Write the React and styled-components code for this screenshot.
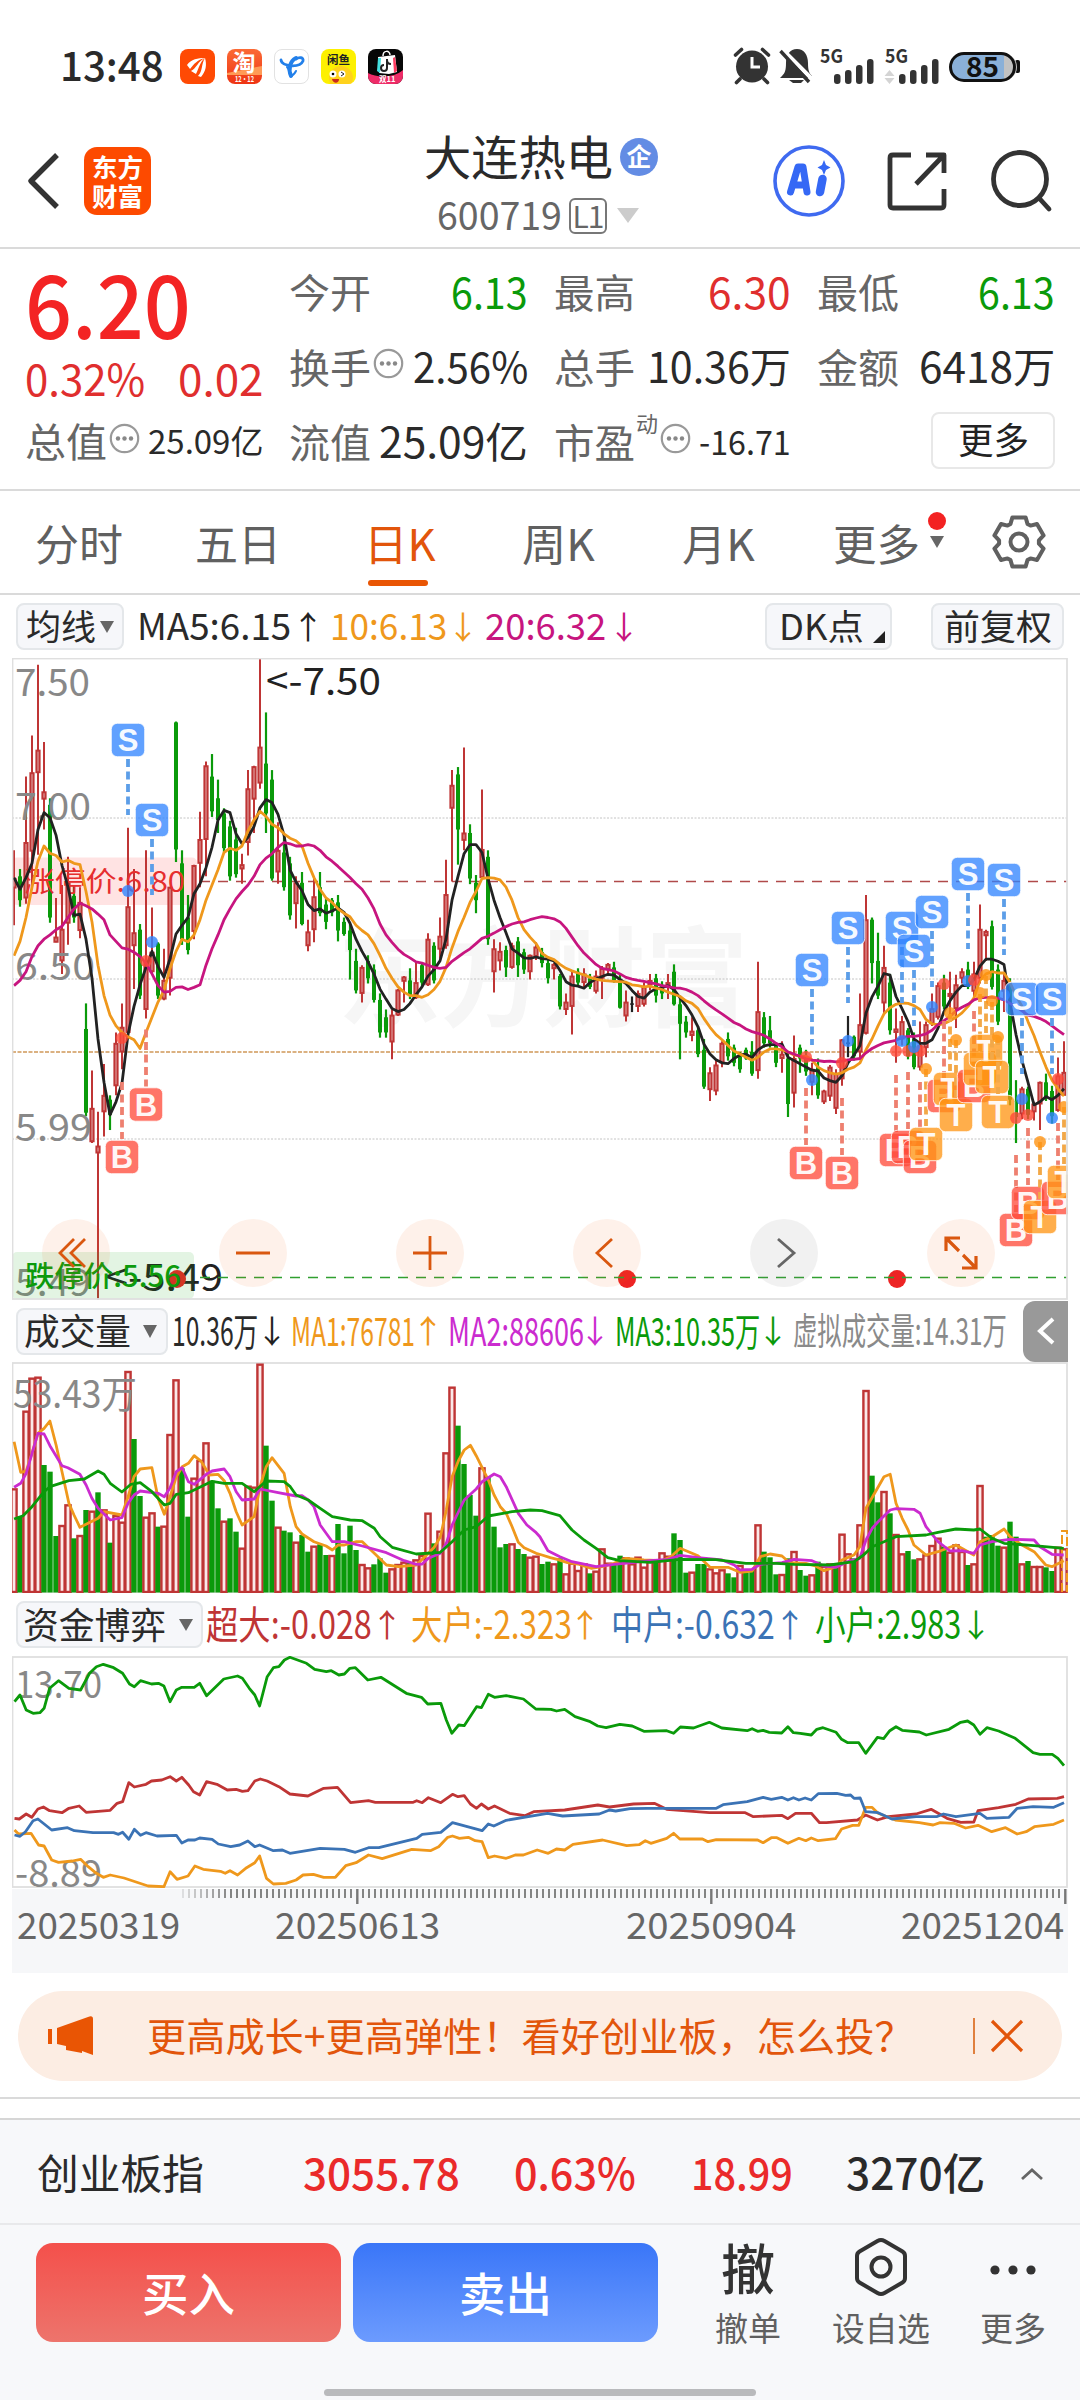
import { useLayoutEffect, useRef, useState } from 'react';
import styled, { createGlobalStyle } from 'styled-components';

const RED = '#bf3535';
const GREEN = '#0a9a0a';
const ORANGE = '#ef981c';
const MAGENTA = '#c7157f';
const PURPLE = '#cb2bcf';
const BLUE = '#3b73b5';
const BRAND = '#e2550b';
const FONT = '"Noto Sans CJK SC", sans-serif';

const GlobalStyle = createGlobalStyle`
* { box-sizing: border-box; }
body { margin: 0; background: #fff; }
`;

const Page = styled.div`
width: 1080px;
height: 2400px;
overflow: hidden;
display: flex;
flex-direction: column;
background: #fff;
color: #2a2a2a;
font-family: ${FONT};
svg { display: block; flex: none; overflow: visible; }
`;

/* text squeezed or stretched to a given width */
const FitBox = styled.span`
display: block;
flex: none;
width: ${p => p.$w}px;
margin-left: ${p => p.$ml || 0}px;
padding-bottom: 0.1em;
white-space: nowrap;
line-height: 1;
font-size: ${p => p.$size}px;
font-weight: ${p => p.$weight || 400};
color: ${p => p.$color || 'inherit'};
span { display: inline-block; transform-origin: 0 50%; }
`;

function Fit({ w, ml, size, weight, color, children }) {
  const ref = useRef(null);
  const [scale, setScale] = useState(1);
  useLayoutEffect(() => {
    setScale(w / ref.current.offsetWidth);
  }, [w, children]);
  return (
    <FitBox $w={w} $ml={ml} $size={size} $weight={weight} $color={color}>
      <span ref={ref} style={{ transform: `scaleX(${scale})` }}>{children}</span>
    </FitBox>
  );
}

const Arrow = styled.span`
flex: none;
display: flex;
justify-content: center;
width: 14px;
margin-left: ${p => p.$ml}px;
padding-bottom: 4px;
line-height: 1;
font-size: 32px;
color: ${p => p.$color};
`;

const Triangle = styled.i`
flex: none;
width: 0;
height: 0;
margin-left: ${p => p.$ml}px;
margin-top: ${p => p.$mt || 0}px;
border-left: ${p => p.$w / 2}px solid transparent;
border-right: ${p => p.$w / 2}px solid transparent;
border-top: ${p => p.$h}px solid ${p => p.$color || '#666'};
`;

/* ---------- status bar ---------- */
const StatusBar = styled.div`
display: flex;
align-items: center;
height: 74px;
margin: 29px 0 11px;
padding-left: 60px;
`;
const AppIcon = styled.div`
flex: none;
width: 35px;
height: 35px;
margin-left: ${p => p.$ml || 12}px;
border-radius: 8px;
overflow: hidden;
background: ${p => p.$bg};
border: ${p => (p.$line ? '1px solid #e2e2e2' : 'none')};
`;
const StatusRight = styled.div`
display: flex;
align-items: center;
margin-left: 331px;
`;

function StatusIcons() {
  return (
    <svg width="290" height="40" viewBox="0 0 290 40">
      <g fill="#333" stroke="#333">
        <circle cx="18" cy="20.500" r="16" stroke="none" />
        <path d="M1.500 9 7.500 3.500M34.500 9 28.500 3.500M6 33 2.500 36.500M30 33 33.500 36.500" strokeWidth="3.600" strokeLinecap="round" />
        <path d="M18 11v10h8" fill="none" stroke="#fff" strokeWidth="3" />
        <path d="M48 30c3-3 4-6 4-13 0-8 4-14 11-14s11 6 11 14c0 7 1 10 4 13v2H46z" stroke="none" />
        <path d="M55 34h15l-3 3h-8z" stroke="none" />
        <path d="M49 4 78 33" stroke="#fff" strokeWidth="4" />
        <path d="M46.500 5 75 36" strokeWidth="3.400" />
      </g>
      <g fill="#333" fontFamily='"Noto Sans CJK SC", sans-serif' fontWeight="700" fontSize="19">
        <text x="86" y="17" textLength="23" lengthAdjust="spacingAndGlyphs">5G</text>
        <text x="151" y="17" textLength="23" lengthAdjust="spacingAndGlyphs">5G</text>
      </g>
      <g fill="#333">
        {[100, 165].map(x =>
          [10, 14, 19, 25].map((h, i) => (
            <rect key={x + '-' + h} x={x + i * 11} y={38 - h} width="6.500" height={h} rx="3" />
          ))
        )}
      </g>
      <path d="m155.500 24 5 6h-10zM155.500 38l5-6h-10z" fill="#d4d4d4" />
      <rect x="281" y="14" width="5" height="13" rx="2" fill="#111" />
      <rect x="216.500" y="7.500" width="64" height="27" rx="13.500" fill="#8ab0d8" />
      <path d="M270 8a13 13 0 0 1 0 26z" fill="#c2c2c2" />
      <rect x="216.500" y="7.500" width="64" height="27" rx="13.500" fill="none" stroke="#111" strokeWidth="3" />
      <text x="232" y="31" fontFamily='"Noto Sans CJK SC", sans-serif' fontWeight="700" fontSize="28" textLength="33" lengthAdjust="spacingAndGlyphs" fill="#111">85</text>
    </svg>
  );
}

/* ---------- header ---------- */
const Header = styled.header`
display: flex;
align-items: center;
height: 135px;
padding-left: 27px;
border-bottom: 2px solid #dadada;
`;
const Logo = styled.div`
flex: none;
width: 67px;
height: 68px;
margin-left: 23px;
padding: 4px 0 0 8px;
border-radius: 13px;
background: #fd4a00;
color: #fff;
font-weight: 700;
font-size: 25.500px;
line-height: 29px;
`;
const TitleBox = styled.div`
width: 240px;
margin-left: 273px;
margin-top: 10px;
`;
const TitleRow = styled.div`
display: flex;
align-items: center;
height: ${p => p.$h}px;
padding-left: ${p => p.$pl || 0}px;
`;
const Verified = styled.span`
flex: none;
width: 38px;
height: 38px;
margin-left: 7px;
border-radius: 50%;
background: #638ce4;
color: #fff;
font-weight: 700;
font-size: 25px;
line-height: 35px;
text-align: center;
`;
const Level = styled.span`
flex: none;
width: 38px;
height: 36px;
margin-left: 7px;
border: 2px solid #777;
border-radius: 6px;
color: #666;
font-size: 30px;
line-height: 31px;
text-align: center;
letter-spacing: -1px;
`;

/* ---------- quote ---------- */
const Quote = styled.section`
display: flex;
height: 242px;
padding-left: 25px;
border-bottom: 2px solid #dadada;
`;
const QuoteMain = styled.div`
width: 264px;
padding-top: 12px;
`;
const Line = styled.div`
display: flex;
align-items: center;
height: ${p => p.$h}px;
`;
const QuoteGrid = styled.div`
display: grid;
grid-template-columns: 239px 237px 238px;
grid-auto-rows: 75px;
column-gap: 26px;
padding-top: 6px;
`;
const Cell = styled.div`
display: flex;
align-items: center;
`;
const Push = styled.i`
flex: 1;
`;
const Sup = styled.sup`
width: 22px;
margin: -42px 0 0 1px;
font-size: 22px;
line-height: 1;
color: #666;
`;
const MoreButton = styled.button`
width: 124px;
height: 57px;
margin-left: auto;
margin-bottom: 5px;
display: flex;
align-items: center;
justify-content: center;
padding: 0;
border: 2px solid #e8e8e8;
border-radius: 8px;
background: #fff;
color: #222;
font-family: inherit;
`;

function Info({ ml }) {
  return (
    <svg width="31" height="31" viewBox="0 0 31 31" style={{ marginLeft: ml, marginTop: -8 }}>
      <circle cx="15.500" cy="15.500" r="13.700" fill="none" stroke="#999" strokeWidth="2.200" />
      <g fill="#888"><circle cx="9" cy="15.500" r="2.200" /><circle cx="15.500" cy="15.500" r="2.200" /><circle cx="22" cy="15.500" r="2.200" /></g>
    </svg>
  );
}

/* ---------- tabs ---------- */
const Tabs = styled.nav`
display: flex;
height: 104px;
padding-left: 35px;
border-bottom: 2px solid #dadada;
color: #606060;
`;
const Tab = styled.div`
flex: none;
width: ${p => p.$w}px;
margin-left: ${p => p.$ml || 0}px;
padding-top: 19px;
color: ${p => (p.$active ? BRAND : 'inherit')};
&::after {
  content: '';
  display: ${p => (p.$active ? 'block' : 'none')};
  width: 60px;
  height: 6px;
  margin: 1px 0 0 4px;
  border-radius: 3px;
  background: #e95504;
}
`;
const TabMark = styled.div`
display: flex;
flex-direction: column;
align-items: center;
width: 20px;
margin: 21px 0 0 7px;
`;
const Dot = styled.i`
width: 18px;
height: 18px;
margin-bottom: 6px;
border-radius: 50%;
background: #f32222;
`;

function Gear() {
  const pts = [];
  for (let k = 0; k < 6; k++) {
    [[-25, 20], [-15, 25.500], [15, 25.500], [25, 20]].forEach(([a, r]) => {
      const t = ((k * 60 + a - 90) * Math.PI) / 180;
      pts.push(`${(28 + r * Math.cos(t)).toFixed(1)},${(28 + r * Math.sin(t)).toFixed(1)}`);
    });
  }
  return (
    <svg width="56" height="56" viewBox="0 0 56 56" style={{ margin: '23px 0 0 44px' }}>
      <polygon points={pts.join(' ')} fill="none" stroke="#606060" strokeWidth="4" strokeLinejoin="round" />
      <circle cx="28" cy="28" r="8.500" fill="none" stroke="#606060" strokeWidth="4" />
    </svg>
  );
}

/* ---------- indicator rows ---------- */
const Legend = styled.div`
display: flex;
align-items: center;
height: ${p => p.$h}px;
padding-left: 16px;
margin-right: 12px;
`;
const Chip = styled.div`
flex: none;
display: flex;
align-items: center;
width: ${p => p.$w}px;
height: 47px;
margin-left: ${p => p.$ml || 0}px;
padding-left: ${p => p.$pl}px;
border: 2px solid #e4e7ea;
border-radius: 8px;
background: #f6f7fa;
`;
const Corner = styled.i`
margin: 20px 0 0 9px;
border-left: 12px solid transparent;
border-bottom: 12px solid #222;
`;
const Collapse = styled.div`
display: flex;
align-items: center;
justify-content: center;
width: 45px;
height: 61px;
margin-left: auto;
border-radius: 12px 0 0 12px;
background: #999;
`;

/* ---------- charts ---------- */
const Panel = styled.div`
flex: none;
position: relative;
width: 1056px;
height: ${p => p.$h}px;
margin-left: 12px;
overflow: hidden;
`;
const Controls = styled.div`
position: absolute;
left: 30px;
bottom: 13px;
display: flex;
gap: 109px;
`;
const Round = styled.div`
width: 68px;
height: 68px;
display: flex;
align-items: center;
justify-content: center;
border-radius: 50%;
background: ${p => (p.$grey ? 'rgba(120,120,120,.1)' : 'rgba(245,100,20,.09)')};
`;

// one candle per trading day: colour, high, body top, body bottom, low
const candles = `r 485 550 572 658|g 528 545 600 615|r 315 467 595 608|r 220 306 487 570|r 57 254 306 495|r 235 350 367 437|g 365 380 640 652|r 595 685 697 697|r 565 667 740 770|r 500 560 653 703|g 565 590 640 652|r 570 605 670 688|g 838 897 1090 1098|r 993 1080 1157 1160|r 1088 1167 1183 1521|r 978 1050 1088 1145|g 1050 1060 1095 1130|r 905 930 1028 1050|r 838 893 950 990|r 433 615 905 920|r 528 675 705 805|g 655 668 820 828|r 485 740 852 873|r 617 720 765 770|g 697 700 820 828|r 712 785 828 831|r 570 570 780 820|g 188 190 483 512|g 485 515 690 703|g 588 640 715 725|r 518 520 672 690|r 396 460 515 570|r 280 290 460 545|g 263 315 395 408|g 322 365 415 445|g 388 400 480 490|g 417 430 545 555|g 433 460 540 548|r 493 518 528 562|r 300 343 467 497|r 290 292 367 445|r 42 247 330 343|g 167 285 400 445|g 300 322 550 555|r 420 485 535 562|g 455 490 570 578|g 500 515 635 645|r 545 560 608 665|g 535 560 655 658|r 645 673 705 718|r 550 592 668 697|g 535 570 630 637|g 597 610 650 667|g 595 600 628 637|g 588 605 670 695|g 640 650 678 682|g 655 670 715 783|g 712 740 808 815|r 750 755 815 836|g 727 740 780 792|g 748 760 830 836|g 815 830 905 917|g 852 870 905 917|r 852 865 927 967|r 805 807 865 867|r 775 777 787 836|g 757 785 820 828|r 742 790 825 828|g 745 750 790 798|r 676 690 795 798|g 697 705 785 792|r 640 683 713 735|r 507 587 705 712|r 300 335 388 557|g 293 310 437 518|r 248 445 462 485|g 425 445 550 563|g 542 560 600 630|r 345 483 548 550|g 485 500 690 703|r 690 712 765 813|r 697 718 740 762|g 705 715 755 777|r 698 705 755 758|g 685 695 750 777|g 712 720 760 770|r 725 727 765 783|r 697 708 730 738|g 710 720 745 755|g 735 745 780 792|r 745 748 758 783|g 770 775 845 852|r 815 835 852 865|r 763 775 845 910|g 757 765 790 798|r 757 770 790 800|g 770 780 800 805|r 762 775 810 815|r 752 757 780 828|r 745 748 760 770|g 742 755 785 790|g 770 790 848 850|r 808 835 867 880|k 822 838 841 858|r 808 815 845 858|r 790 800 840 845|r 770 785 795 808|g 770 780 820 836|g 787 795 815 828|r 770 790 800 828|g 748 765 840 843|g 820 840 885 967|g 867 880 905 917|r 870 902 912 925|g 890 900 955 962|g 920 945 1030 1035|r 985 998 1037 1063|r 970 980 1040 1050|r 925 930 975 985|g 905 920 960 970|g 933 940 975 983|g 950 960 990 998|g 940 945 965 968|g 925 950 1000 1005|r 742 857 993 1012|g 858 870 930 940|g 867 900 930 940|g 930 935 975 985|r 925 955 965 998|g 950 965 1070 1100|r 912 965 1045 1078|g 933 940 965 998|g 945 960 995 1005|r 975 990 1020 1050|g 965 985 1050 1058|r 1037 1040 1065 1070|r 980 985 1052 1063|r 990 1000 1080 1093|r 920 922 1012 1028|k 867 928 932 962|g 912 915 960 970|r 815 887 950 965|r 588 645 907 910|g 640 645 745 792|g 675 740 820 828|r 705 755 837 865|g 770 790 900 910|r 850 897 905 975|r 867 880 920 935|g 895 900 960 967|g 905 920 985 990|r 880 935 985 993|r 880 887 940 962|r 815 850 885 890|r 790 797 870 875|g 772 790 845 852|r 765 815 822 875|r 772 795 850 895|r 757 765 780 792|g 742 760 800 805|r 742 770 810 825|r 610 667 780 792|r 668 672 682 740|g 647 660 800 806|g 748 760 880 888|r 770 785 810 858|g 780 800 1060 1073|g 1015 1060 1100 1160|r 1030 1035 1093 1105|g 1030 1035 1095 1105|r 1065 1070 1088 1108|r 1018 1020 1070 1130|g 1000 1020 1055 1063|g 1028 1040 1098 1115|r 963 1005 1085 1088|r 925 997 1050 1050`
  .split('|')
  .map(row => {
    const [c, ...v] = row.split(' ');
    return { c, v: v.map(Number) };
  });

const ma5 = [548,575,548,515,437,398,410,450,520,570,635,632,690,780,920,1020,1095,1065,1022,910,845,795,755,718,753,778,735,678,658,640,585,562,525,478,415,393,398,447,470,455,430,387,368,375,402,450,530,558,578,610,624,620,630,625,618,628,653,690,718,742,770,805,828,850,857,852,838,818,800,775,760,740,690,600,545,493,472,472,490,550,600,640,675,712,722,733,734,731,735,736,740,762,788,796,798,803,790,782,776,771,773,783,792,808,822,826,812,804,802,797,806,825,843,865,892,932,955,968,975,977,965,957,955,963,945,936,933,933,932,962,970,977,985,992,994,1010,1016,1020,1005,975,957,935,860,823,798,769,773,822,850,880,920,930,930,922,895,857,832,812,797,797,783,752,736,736,741,748,835,910,970,1020,1072,1065,1053,1060,1050,1035];
const ma10 = [728,695,640,570,510,475,492,497,512,508,515,518,580,650,750,820,865,890,905,915,922,942,905,870,835,808,758,718,690,696,680,645,600,565,530,490,480,485,475,440,415,395,407,425,433,447,457,463,475,515,548,575,595,605,620,630,638,658,670,680,700,727,757,780,800,812,820,820,824,818,806,787,755,710,672,640,605,580,550,548,549,553,570,600,640,668,685,700,723,732,737,748,757,763,768,772,778,782,785,786,787,788,789,795,797,800,798,803,806,812,817,822,832,838,850,873,893,910,922,935,948,955,962,969,962,950,943,943,945,950,957,960,960,968,985,993,998,1001,998,990,985,975,945,920,890,862,848,840,837,838,843,852,875,885,887,885,878,870,860,845,825,785,770,765,768,768,790,820,845,880,912,950,985,1015,1035,1052];
const ma20 = [797,785,765,730,705,690,680,668,660,640,620,607,613,620,632,645,680,695,710,713,720,730,745,770,797,812,810,801,800,806,801,795,750,712,680,645,620,597,580,565,545,518,503,493,478,467,470,475,475,472,475,485,500,510,522,535,548,562,575,595,620,655,680,697,713,725,733,742,745,750,755,757,755,741,731,721,712,700,688,683,676,668,661,655,651,650,645,641,638,640,643,650,665,685,705,722,735,748,757,760,763,770,778,782,785,787,790,793,797,799,802,803,806,812,820,832,843,853,862,872,882,888,897,903,907,912,920,930,938,950,955,960,966,969,970,972,971,973,971,968,967,965,952,942,935,929,926,923,917,914,914,912,908,900,887,878,868,855,847,840,830,825,824,824,826,830,838,845,855,865,868,873,880,890,900,910];

// kind, x, price point, badge centre
const marks = [
  ['S', 128, 891, 740], ['S', 152, 942, 820], ['B', 146, 961, 1104.5], ['B', 122, 1038, 1157],
  ['B', 806, 1057, 1163], ['B', 842, 1063, 1173], ['S', 812, 1080, 970], ['S', 848, 1041, 928],
  ['B', 896, 1051, 1150], ['B', 908, 1051, 1147], ['B', 920, 1051, 1157], ['T', 926, 1069, 1144],
  ['S', 902, 1041, 928], ['S', 914, 1047, 951], ['S', 932, 1007, 912], ['B', 944, 984, 1096],
  ['T', 950, 1013, 1089], ['T', 956, 1040, 1115], ['S', 968, 981, 874], ['B', 974, 980, 1086],
  ['T', 980, 993, 1069], ['T', 986, 975, 1051], ['T', 992, 1001, 1077], ['T', 998, 1037, 1112],
  ['S', 1004, 995, 880], ['B', 1016, 1118, 1230], ['S', 1022, 1099, 999], ['B', 1028, 1115, 1203],
  ['T', 1040, 1142, 1217], ['S', 1052, 1118, 999], ['B', 1058, 1079, 1198], ['T', 1064, 1107, 1182],
];
const markColor = { S: '#2f84ff', B: '#ff4a38', T: '#ff9412' };

const dayX = i => 14 + i * 6;
const priceY = v => v / 2.306 + 640;
const dayLine = arr => arr.map((v, i) => `${dayX(i)},${priceY(v).toFixed(1)}`).join(' ');

function AxisText({ x, cy, w, size = 38, color = '#888', weight = 400, children }) {
  return (
    <text x={x} y={cy + size * 0.367} fontSize={size} fontFamily={FONT} fontWeight={weight} fill={color} textLength={w} lengthAdjust="spacingAndGlyphs">
      {children}
    </text>
  );
}

function Mark({ kind, x, dot, badge }) {
  const up = kind === 'S';
  const color = markColor[kind];
  return (
    <g>
      <line x1={x} x2={x} y1={up ? badge + 19 : badge - 75} y2={up ? badge + 75 : badge - 18} stroke={up ? '#5c9ee8' : kind === 'B' ? '#ee8070' : '#f2a848'} strokeWidth="3.800" strokeDasharray="8 4.500" />
      <circle cx={x} cy={dot} r="6" fill={color} opacity=".8" />
      <rect x={x - 16.7} y={badge - 16.7} width="33.400" height="33.400" rx="6" fill={color} fillOpacity=".76" stroke="#fff" strokeOpacity=".8" strokeWidth="1" />
      <text x={x} y={badge + 11} fontSize="31" fontFamily='"Liberation Sans", Arial, sans-serif' fontWeight="700" fill="#fff" fillOpacity=".95" textAnchor="middle">{kind}</text>
    </g>
  );
}

function PriceChart() {
  return (
    <svg width="1056" height="642" viewBox="12 658 1056 642">
      <AxisText x={338} cy={978} w={410} size={108} weight={700} color="#f6f6f6">东方财富</AxisText>
      {[818, 979, 1139].map(y => (
        <line key={y} x1="12" x2="1067" y1={y} y2={y} stroke="#c4c4c4" strokeWidth="1" strokeDasharray="2 1.500" />
      ))}
      <rect x="12" y="857.500" width="185" height="47.500" rx="5" fill="#ffe3e3" />
      <line x1="200" x2="1067" y1="881.500" y2="881.500" stroke="#b04a4a" strokeWidth="1.500" strokeDasharray="10 8" />
      <line x1="12" x2="1067" y1="1052" y2="1052" stroke="#d09858" strokeWidth="1.600" strokeDasharray="4 1.500" />
      {candles.map(({ c, v }, i) => {
        const [hi, top, bot, lo] = v.map(priceY);
        const x = dayX(i);
        if (c === 'r') {
          return (
            <g key={i} stroke={RED} strokeWidth="2">
              <line x1={x} x2={x} y1={hi} y2={lo} />
              <rect x={x - 1.6} y={top + 0.5} width="3.200" height={Math.max(bot - top - 1, 2)} fill="#e09a9a" />
            </g>
          );
        }
        const fill = c === 'g' ? GREEN : '#222';
        return (
          <g key={i} fill={fill}>
            <rect x={x - 1.1} y={hi} width="2.200" height={lo - hi} />
            <rect x={x - 2} y={top} width="4" height={bot - top} />
          </g>
        );
      })}
      <AxisText x={15} cy={682} w={75}>7.50</AxisText>
      <AxisText x={15} cy={806} w={76}>7.00</AxisText>
      <AxisText x={15} cy={966} w={80}>6.50</AxisText>
      <AxisText x={15} cy={1127} w={77}>5.99</AxisText>
      <AxisText x={15} cy={1282} w={76}>5.49</AxisText>
      <AxisText x={266} cy={681} w={115} color="#222">&lt;-7.50</AxisText>
      <AxisText x={24} cy={882} w={161} size={28} color="#e62e2e">涨停价:6.80</AxisText>
      <g fill="none" strokeWidth="2.800" strokeLinejoin="round">
        <polyline points={dayLine(ma5)} stroke="#222" />
        <polyline points={dayLine(ma10)} stroke={ORANGE} />
        <polyline points={dayLine(ma20)} stroke={MAGENTA} />
      </g>
      {marks.map(([kind, x, dot, badge], i) => (
        <Mark key={i} kind={kind} x={x} dot={dot} badge={badge} />
      ))}
      <AxisText x={105} cy={1277} w={118} color="#222">&lt;-5.49</AxisText>
      {[177, 627, 897].map(x => <circle key={x} cx={x} cy="1279" r="9" fill="#ed2424" />)}
      <rect x="12" y="1252" width="182" height="47" rx="5" fill="rgba(40,170,40,.13)" />
      <line x1="200" x2="1067" y1="1277.500" y2="1277.500" stroke="#30a030" strokeWidth="1.500" strokeDasharray="10 8" />
      <AxisText x={25} cy={1276} w={156} size={29} weight={500} color="#0c9a0c">跌停价:5.56</AxisText>
      <rect x="12.500" y="658.500" width="1054.500" height="640.500" fill="none" stroke="#dfdfdf" strokeWidth="1.800" />
    </svg>
  );
}

// bar tops, negative for a falling day
const volumes = [595,-680,362,263,260,-525,-545,-738,705,643,-745,735,-660,662,-607,658,-758,675,695,243,-447,-618,680,667,-710,707,432,268,-535,-680,563,510,457,-572,-655,692,-685,-725,773,587,590,221,-467,-632,710,-722,-727,755,-735,-785,767,-763,-795,795,-702,-790,-707,-780,822,832,-823,-805,-848,835,822,815,-818,808,795,668,-760,722,487,290,-407,-522,-615,-677,532,-558,-710,-772,-762,760,-777,-792,800,797,-822,-815,820,-805,850,818,840,820,-850,842,775,818,-822,-797,802,820,800,830,812,-815,787,797,-730,-750,-848,845,-822,-822,835,847,838,-850,-862,825,-848,-838,703,-785,-802,-853,852,-805,783,-840,-857,853,-815,828,820,-823,731,790,-805,703,300,-557,-637,603,-670,732,790,-783,-808,805,793,765,743,-770,785,763,783,-825,820,585,-740,-735,-767,770,-695,-740,820,-813,828,828,-832,-843,770,775];

const volMa = [
  [ORANGE, '41,455 60,547 76,543 93,490 110,430 128,415 145,393 163,465 180,545 200,640 215,675 232,712 250,703 285,685 302,665 354,675 372,620 389,560 407,537 441,533 459,625 477,673 494,620 512,560 529,530 547,520 564,497 585,515 608,555 633,553 651,572 668,610 686,665 703,705 738,680 755,590 773,530 790,503 825,550 843,650 860,710 877,732 912,755 947,768 965,780 982,765 1000,765 1035,755 1052,755 1087,790 1122,825 1157,830 1209,825 1244,790 1261,772 1279,740 1296,660 1313,560 1331,513 1348,480 1366,466 1383,497 1418,570 1435,615 1453,650 1470,670 1487,710 1505,757 1522,773 1557,790 1574,795 1598,803 1618,808 1648,818 1678,822 1718,835 1748,830 1783,820 1818,805 1870,810 1922,812 1948,800 1975,775 2027,797 2062,832 2114,832 2149,847 2184,843 2208,800 2236,792 2271,798 2293,818 2340,820 2368,828 2393,842 2428,830 2445,810 2480,795 2497,770 2515,655 2567,560 2585,553 2602,640 2620,685 2637,720 2654,765 2689,795 2724,785 2776,765 2828,795 2846,755 2881,740 2916,717 2933,740 2968,765 3003,785 3037,825 3055,830 3089,812'],
  [PURPLE, '41,592 60,580 76,550 93,490 110,430 128,432 145,467 180,527 197,533 232,553 250,585 267,625 285,655 320,690 354,683 372,640 389,615 407,603 459,610 477,620 494,593 512,545 529,533 547,575 564,583 599,553 616,543 651,537 668,560 686,605 703,630 738,627 755,597 808,608 860,618 877,617 895,630 912,650 930,705 965,755 1000,755 1052,768 1122,788 1174,812 1209,823 1226,822 1244,805 1279,790 1296,760 1313,705 1348,630 1383,597 1400,575 1435,552 1453,560 1470,590 1505,670 1530,705 1557,728 1568,740 1591,782 1626,800 1661,815 1731,830 1783,823 1835,818 1888,812 1940,808 1975,796 2027,803 2097,810 2132,825 2149,840 2184,838 2208,823 2271,818 2306,808 2358,812 2393,828 2428,832 2462,815 2497,805 2515,750 2533,715 2550,695 2585,660 2602,656 2654,658 2672,670 2689,710 2724,755 2759,783 2794,782 2828,790 2846,765 2881,755 2933,748 3003,750 3020,770 3055,793 3089,795'],
  [GREEN, '41,687 67,677 93,650 128,605 145,590 200,572 245,567 285,543 302,553 320,580 354,606 380,583 407,578 441,605 477,645 494,640 512,613 547,608 616,574 651,580 703,580 738,605 773,573 825,575 843,590 860,615 895,630 930,655 965,680 1017,690 1052,692 1087,715 1104,740 1139,772 1209,792 1279,787 1313,755 1348,720 1383,710 1418,678 1487,665 1540,660 1574,662 1626,677 1661,720 1696,750 1731,775 1765,803 1800,812 1888,817 1975,808 2079,809 2166,820 2254,820 2306,823 2410,825 2480,815 2508,795 2533,770 2567,755 2602,740 2689,735 2724,727 2776,717 2828,720 2846,717 2881,745 2916,760 3003,767 3089,775'],
];

const scalePoints = (s, kx, dy) =>
  s.split(' ').map(p => {
    const [x, y] = p.split(',');
    return `${(x / kx).toFixed(1)},${(y / 3 + dy).toFixed(1)}`;
  }).join(' ');

function VolumeChart() {
  return (
    <svg width="1056" height="231" viewBox="12 1362 1056 231">
      <rect x="12.500" y="1363" width="1054.500" height="230" fill="none" stroke="#dfdfdf" strokeWidth="1.800" />
      {volumes.map((v, i) => {
        const top = Math.abs(v) / 3 + 1290;
        return v < 0
          ? <rect key={i} x={dayX(i) - 2.7} y={top} width="5.400" height={1592.5 - top} fill={GREEN} />
          : <rect key={i} x={dayX(i) - 2.6} y={top + 1} width="5.200" height={1591 - top} fill="#fbe9e9" stroke={RED} strokeWidth="2.400" />;
      })}
      <path d="M1062 1592v-61h5v61" fill="none" stroke={ORANGE} strokeWidth="2" strokeDasharray="9 3" />
      <AxisText x={13} cy={1394.5} w={124}>53.43万</AxisText>
      {volMa.map(([color, pts]) => (
        <polyline key={color} points={scalePoints(pts, 2.904, 1290)} fill="none" stroke={color} strokeWidth="2.800" strokeLinejoin="round" />
      ))}
    </svg>
  );
}

const funds = [
  [GREEN, '21,305 29,285 38,330 48,340 58,338 64,325 72,265 85,242 100,265 117,270 130,220 140,200 150,193 165,203 178,220 188,252 195,260 204,242 220,252 230,250 238,258 247,305 256,270 264,262 282,262 290,250 300,287 325,237 345,228 352,235 362,265 370,285 377,318 388,230 397,203 405,200 413,180 421,172 445,190 457,208 474,215 481,212 492,225 500,222 508,205 516,203 534,240 553,232 590,280 612,292 621,312 640,310 648,360 656,400 666,375 674,377 692,320 699,323 709,283 718,292 735,287 760,297 778,327 800,328 808,333 820,328 835,350 857,365 868,378 880,383 900,373 918,378 935,394 968,392 978,400 988,381 1007,384 1030,367 1048,384 1085,392 1092,386 1100,394 1108,391 1117,397 1135,399 1144,380 1152,398 1162,400 1178,405 1186,388 1195,383 1214,397 1222,418 1231,428 1247,428 1257,460 1274,412 1283,416 1292,392 1301,380 1310,391 1335,396 1345,405 1378,388 1395,367 1405,363 1414,375 1423,403 1433,383 1450,393 1474,415 1500,458 1510,463 1528,463 1536,475 1545,497'],
  [RED, '21,655 28,657 38,642 46,652 55,627 63,621 72,632 90,638 100,625 115,618 125,637 160,631 170,610 178,605 187,548 195,561 212,553 220,543 235,540 247,530 256,543 264,532 274,555 281,575 290,585 300,545 315,553 330,570 343,568 352,574 360,572 370,543 378,537 388,543 405,560 421,582 447,588 470,565 490,562 509,608 535,602 545,607 600,607 605,602 613,608 622,593 640,608 657,583 665,590 674,587 683,612 692,625 699,612 709,627 718,618 740,640 762,647 775,635 820,630 868,615 885,621 920,612 950,610 968,628 1030,638 1082,638 1094,650 1135,646 1144,656 1155,640 1178,640 1190,668 1200,668 1245,660 1257,645 1274,660 1290,650 1330,642 1352,628 1375,655 1395,667 1414,666 1420,632 1450,623 1475,613 1493,597 1535,595 1545,590'],
  [ORANGE, '21,690 27,702 45,700 56,735 64,738 75,780 85,787 105,783 117,778 128,800 140,820 150,832 160,825 180,834 215,858 238,860 247,815 257,838 273,828 283,798 295,808 320,814 327,820 334,812 345,825 358,803 370,788 377,768 387,835 397,852 415,850 430,840 440,825 455,823 470,832 487,832 502,797 517,788 535,765 555,776 598,748 625,752 637,740 650,712 657,708 667,715 680,712 690,722 700,725 709,773 718,768 735,775 748,765 760,765 780,750 796,760 808,747 820,750 832,733 875,720 910,737 928,734 937,722 945,730 968,715 978,700 987,717 1020,717 1028,725 1040,719 1100,720 1108,728 1120,713 1128,713 1144,730 1160,715 1170,722 1178,714 1188,722 1213,716 1222,687 1238,676 1247,676 1257,622 1266,622 1275,640 1300,660 1335,668 1355,675 1365,668 1385,670 1402,684 1420,676 1440,695 1460,683 1477,702 1490,695 1502,680 1530,673 1545,660'],
  [BLUE, '21,705 29,709 37,695 48,662 55,657 75,690 98,683 108,692 135,698 165,698 172,703 178,697 187,718 195,688 204,706 212,698 228,708 256,706 264,729 273,720 283,720 290,714 308,718 317,732 335,740 348,735 360,723 370,740 377,735 397,752 410,750 421,760 465,745 500,748 516,757 535,743 550,743 605,715 613,703 640,697 657,668 700,692 709,672 717,678 735,661 795,640 817,648 870,642 885,630 894,633 915,626 940,625 1040,625 1050,614 1085,605 1108,592 1120,598 1135,592 1144,600 1152,593 1160,600 1169,594 1178,600 1188,581 1215,580 1228,586 1235,585 1240,595 1249,594 1257,635 1275,638 1295,657 1330,650 1360,650 1370,642 1388,650 1423,640 1433,655 1465,652 1477,625 1500,620 1530,622 1545,608'],
];

function FundChart() {
  return (
    <svg width="1056" height="232" viewBox="12 1656 1056 232">
      <rect x="12.500" y="1657" width="1054.500" height="230" fill="none" stroke="#dfdfdf" strokeWidth="1.800" />
      <AxisText x={15} cy={1684} w={87}>13.70</AxisText>
      <AxisText x={15} cy={1873} w={87}>-8.89</AxisText>
      {funds.map(([color, pts]) => (
        <polyline key={color} points={scalePoints(pts, 1.452, 1600)} fill="none" stroke={color} strokeWidth="2.800" strokeLinejoin="round" />
      ))}
    </svg>
  );
}

const Timeline = styled.div`
flex: none;
width: 1056px;
height: 84px;
margin: 1px 0 0 12px;
background: #f6f7f9;
`;
const Dates = styled.div`
display: flex;
align-items: center;
height: 38px;
padding-left: 5px;
color: #666;
`;

function Ticks() {
  const ticks = [];
  for (let x = 183; x <= 1065; x += 6) ticks.push(x);
  return (
    <svg width="1056" height="17" viewBox="12 0 1056 17">
      {ticks.map(x => {
        const major = x === 357 || x === 711 || x === 1065;
        return <rect key={x} x={x - 0.9} y="0" width={major ? 2.4 : 1.8} height={major ? 15 : 9} fill="#777" opacity={Math.min(1, (x - 170) / 60)} />;
      })}
    </svg>
  );
}

/* ---------- banner & footer ---------- */
const Banner = styled.div`
flex: none;
display: flex;
align-items: center;
width: 1044px;
height: 90px;
margin: 18px 0 0 18px;
padding-left: 30px;
border-radius: 45px;
background: #fcede3;
`;
const Rule = styled.i`
width: 2px;
height: 36px;
margin-left: 59px;
background: #e0803e;
`;
const Gap = styled.div`
flex: none;
height: 23px;
margin-top: 16px;
border-top: 2px solid #dadada;
border-bottom: 2px solid #d6d6d6;
`;
const Footer = styled.footer`
flex: 1;
background: #f7f8fa;
`;
const IndexRow = styled.div`
display: flex;
align-items: center;
height: 105px;
padding: 4px 0 0 37px;
border-bottom: 2px solid #e8e9eb;
`;
const Actions = styled.div`
display: flex;
height: 117px;
padding: 18px 0 0 36px;
`;
const TradeButton = styled.button`
flex: none;
display: flex;
align-items: center;
justify-content: center;
width: 305px;
height: 99px;
margin-right: 12px;
padding: 2px 2px 0 0;
border: 0;
border-radius: 17px;
background: linear-gradient(${p => p.$from}, ${p => p.$to});
color: #fff;
font-family: inherit;
`;
const Action = styled.div`
flex: none;
display: flex;
flex-direction: column;
align-items: center;
width: ${p => p.$w}px;
margin-left: ${p => p.$ml}px;
margin-top: -6px;
color: #333;
`;
const ActionIcon = styled.div`
flex: none;
height: 60px;
margin-bottom: 14px;
padding-top: ${p => p.$pt || 0}px;
display: flex;
align-items: center;
`;
const HomeBar = styled.div`
width: 432px;
height: 7px;
margin: 47px auto 0;
border-radius: 4px;
background: #b9babc;
`;

const iconLine = { fill: 'none', stroke: '#333', strokeWidth: 4.8, strokeLinecap: 'round', strokeLinejoin: 'round' };
const controlLine = { fill: 'none', stroke: '#d9570f', strokeWidth: 2.8 };

function App() {
  return (
    <Page>
      <GlobalStyle />
      <StatusBar>
        <Fit w={104} size={41} weight={500}>13:48</Fit>
        <AppIcon $ml={16} $bg="#ff4a04">
          <svg width="35" height="35" viewBox="0 0 35 35" fill="#fff"><path d="M7 16C11 10 18 9 25 9 17 11 14 15 10 20zM11 22c6-3 6-9 14-13-5 4-6 10-9 16zM18 27c5-5 3-12 7-18 2 7 1 13-4 19z" /></svg>
        </AppIcon>
        <AppIcon $bg="linear-gradient(#fb6a35, #ee3413)">
          <svg width="35" height="35" viewBox="0 0 35 35" fontFamily={FONT} fontWeight="700" fill="#fff"><path d="M0 24 35 17v9H0z" fill="#ff9a56" /><text x="5.500" y="22" fontSize="23">淘</text><text x="8" y="33" fontSize="8" textLength="19" lengthAdjust="spacingAndGlyphs">12·12</text></svg>
        </AppIcon>
        <AppIcon $bg="#fff" $line>
          <svg width="33" height="33" viewBox="0 0 33 33" fill="none" stroke="#2380ea" strokeLinecap="round"><path d="M6 10c1 7 19 8 22 1 1-4-4-4-7-2" strokeWidth="2.800" /><path d="M21 8c-6 3-8 11-5 18" strokeWidth="4" /><path d="M12 17c2 2 2 5 4 9 3-1 4-3 5-5" strokeWidth="2" /></svg>
        </AppIcon>
        <AppIcon $bg="#fdf000">
          <svg width="35" height="35" viewBox="0 0 35 35"><text x="6" y="15" fontFamily={FONT} fontWeight="700" fontSize="11.500" fill="#222">闲鱼</text><circle cx="20" cy="29" r="12" fill="#ffd21c" /><circle cx="12" cy="25" r="3.500" fill="#fff" /><circle cx="21" cy="25" r="3.500" fill="#fff" /><circle cx="12" cy="25" r="1.300" /><path d="m20 23 3 2-3 2" fill="none" stroke="#222" /><path d="M11 30h7c0 5-6 5-7 0z" fill="#c8281e" /></svg>
        </AppIcon>
        <AppIcon $bg="#070707">
          <svg width="35" height="35" viewBox="0 0 35 35"><path d="M0 24c9 5 26 5 35-3v14H0z" fill="#ee2c68" /><path d="M10 8 27 6l2 17-8 2-10-1z" fill="#fff" /><path d="m10 9-1 13 3 2 1-15z" fill="#44e0e0" /><path d="m27 8 2 14-3 2-1-15z" fill="#ff3b60" /><path d="M15 7c0-6 7-6 7-1" fill="none" stroke="#fff" strokeWidth="1.500" /><path d="M19 10v9a3 3 0 1 1-3-3M19 11c0 3 2 4 4 4" fill="none" stroke="#222" strokeWidth="2" /><text x="11" y="33" fontSize="7.500" fontWeight="700" fontFamily={FONT} fill="#fff">双11</text></svg>
        </AppIcon>
        <StatusRight><StatusIcons /></StatusRight>
      </StatusBar>

      <Header>
        <svg width="34" height="58" viewBox="0 0 34 58"><path d="M30 3 4 29 30 55" {...iconLine} strokeWidth="5.400" strokeLinecap="butt" /></svg>
        <Logo>东方<br />财富</Logo>
        <TitleBox>
          <TitleRow $h={60}>
            <Fit w={189} size={47}>大连热电</Fit>
            <Verified>企</Verified>
          </TitleRow>
          <TitleRow $h={58} $pl={13}>
            <Fit w={125} size={39} color="#666">600719</Fit>
            <Level>L1</Level>
            <Triangle $ml={10} $w={23} $h={15} $color="#ccc" />
          </TitleRow>
        </TitleBox>
        <svg width="72" height="72" viewBox="0 0 72 72" style={{ marginLeft: 109 }}>
          <circle cx="36" cy="36" r="34" fill="none" stroke="#3f6af0" strokeWidth="3.600" />
          <path d="M17.500 47 25 22h5l4 25M21 40h11" fill="none" stroke="#3568f5" strokeWidth="7" strokeLinejoin="round" strokeLinecap="round" />
          <path d="M49.500 34 47 47" stroke="#3568f5" strokeWidth="8.500" strokeLinecap="round" />
          <path d="m51 15 2 5 4.500 2.500-4.500 2.500-2 5-2-5-4.500-2.500 4.500-2.500z" fill="#3568f5" />
        </svg>
        <svg width="60" height="60" viewBox="0 0 60 60" style={{ marginLeft: 42 }}>
          <path d="M24 4H6q-3 0-3 3v47q0 3 3 3h48q3 0 3-3V38M39 4h18v18M56 5 29 33" {...iconLine} strokeLinecap="butt" />
        </svg>
        <svg width="62" height="62" viewBox="0 0 62 62" style={{ marginLeft: 44 }}>
          <circle cx="29" cy="29" r="26.500" {...iconLine} /><path d="m48 48 10 11" {...iconLine} />
        </svg>
      </Header>

      <Quote>
        <QuoteMain>
          <Line $h={88}><Fit w={166} size={88} weight={500} color="#f32424">6.20</Fit></Line>
          <Line $h={62}>
            <Fit w={120} size={43} color="#e02e2e">0.32%</Fit>
            <Fit w={86} ml={33} size={43} color="#e02e2e">0.02</Fit>
          </Line>
          <Line $h={62}>
            <Fit w={82} size={40} color="#666">总值</Fit>
            <Info ml={2} />
            <Fit w={115} ml={8} size={33}>25.09亿</Fit>
          </Line>
        </QuoteMain>
        <QuoteGrid>
          <Cell><Fit w={82} size={40} color="#666">今开</Fit><Push /><Fit w={77} size={43} color={GREEN}>6.13</Fit></Cell>
          <Cell><Fit w={81} size={40} color="#666">最高</Fit><Push /><Fit w={83} size={43} color="#e02e2e">6.30</Fit></Cell>
          <Cell><Fit w={82} size={40} color="#666">最低</Fit><Push /><Fit w={77} size={43} color={GREEN}>6.13</Fit></Cell>
          <Cell><Fit w={82} size={40} color="#666">换手</Fit><Info ml={2} /><Push /><Fit w={115} size={42}>2.56%</Fit></Cell>
          <Cell><Fit w={81} size={40} color="#666">总手</Fit><Push /><Fit w={144} size={42}>10.36万</Fit></Cell>
          <Cell><Fit w={82} size={40} color="#666">金额</Fit><Push /><Fit w={136} size={42}>6418万</Fit></Cell>
          <Cell><Fit w={82} size={40} color="#666">流值</Fit><Push /><Fit w={149} size={42}>25.09亿</Fit></Cell>
          <Cell><Fit w={81} size={40} color="#666">市盈</Fit><Sup>动</Sup><Info ml={2} /><Push /><Fit w={92} size={34}>-16.71</Fit></Cell>
          <Cell><MoreButton><Fit w={71} size={36}>更多</Fit></MoreButton></Cell>
        </QuoteGrid>
      </Quote>

      <Tabs>
        <Tab $w={88}><Line $h={69}><Fit w={88} size={43}>分时</Fit></Line></Tab>
        <Tab $w={86} $ml={72}><Line $h={69}><Fit w={86} size={43}>五日</Fit></Line></Tab>
        <Tab $w={72} $ml={83} $active><Line $h={69}><Fit w={72} size={43}>日K</Fit></Line></Tab>
        <Tab $w={73} $ml={86}><Line $h={69}><Fit w={73} size={43}>周K</Fit></Line></Tab>
        <Tab $w={73} $ml={87}><Line $h={69}><Fit w={73} size={43}>月K</Fit></Line></Tab>
        <Tab $w={87} $ml={78}><Line $h={69}><Fit w={87} size={43}>更多</Fit></Line></Tab>
        <TabMark><Dot /><Triangle $w={14} $h={12} $ml={0} /></TabMark>
        <Gear />
      </Tabs>

      <Legend $h={63}>
        <Chip $w={108} $pl={8}><Fit w={70} size={35}>均线</Fit><Triangle $ml={4} $w={15} $h={12} /></Chip>
        <Fit w={154} ml={13} size={37}>MA5:6.15</Fit><Arrow $ml={10} $color="#222">↑</Arrow>
        <Fit w={117} ml={15} size={37} color={ORANGE}>10:6.13</Fit><Arrow $ml={9} $color={ORANGE}>↓</Arrow>
        <Fit w={121} ml={15} size={37} color={MAGENTA}>20:6.32</Fit><Arrow $ml={11} $color={MAGENTA}>↓</Arrow>
        <Chip $w={127} $ml={134} $pl={12}><Fit w={85} size={35}>DK点</Fit><Corner /></Chip>
        <Chip $w={133} $ml={39} $pl={11}><Fit w={108} size={35}>前复权</Fit></Chip>
      </Legend>

      <Panel $h={642}>
        <PriceChart />
        <Controls>
          <Round><svg width="32" height="32" viewBox="0 0 32 32" style={{ marginLeft: -6 }}><path d="M17 2 3 16l14 14M28 2 14 16l14 14" {...controlLine} /></svg></Round>
          <Round><svg width="34" height="34" viewBox="0 0 34 34"><path d="M0 17h34" {...controlLine} /></svg></Round>
          <Round><svg width="34" height="34" viewBox="0 0 34 34"><path d="M0 17h34M17 0v34" {...controlLine} /></svg></Round>
          <Round><svg width="32" height="32" viewBox="0 0 32 32" style={{ marginLeft: -6 }}><path d="M24 2 9 16l15 14" {...controlLine} /></svg></Round>
          <Round $grey><svg width="32" height="32" viewBox="0 0 32 32" style={{ marginLeft: 4 }}><path d="M8 2l16 14L8 30" {...controlLine} stroke="#666" /></svg></Round>
          <Round><svg width="34" height="34" viewBox="0 0 34 34"><path d="M2 15V2h14M2 2l13 13M32 20v12H18M32 32 19 19" {...controlLine} strokeWidth="3.200" /></svg></Round>
        </Controls>
      </Panel>

      <Legend $h={62}>
        <Chip $w={152} $pl={6}><Fit w={107} size={36}>成交量</Fit><Triangle $ml={12} $w={15} $h={13} /></Chip>
        <Fit w={86} ml={4} size={39}>10.36万</Fit><Arrow $ml={7} $color="#222">↓</Arrow>
        <Fit w={124} ml={12} size={39} color={ORANGE}>MA1:76781</Fit><Arrow $ml={6} $color={ORANGE}>↑</Arrow>
        <Fit w={136} ml={13} size={39} color={PURPLE}>MA2:88606</Fit><Arrow $ml={4} $color={PURPLE}>↓</Arrow>
        <Fit w={145} ml={13} size={39} color={GREEN}>MA3:10.35万</Fit><Arrow $ml={6} $color={GREEN}>↓</Arrow>
        <Fit w={214} ml={13} size={37} color="#8a8a8a">虚拟成交量:14.31万</Fit>
        <Collapse><svg width="20" height="32" viewBox="0 0 20 32"><path d="M17 4 4 16l13 12" fill="none" stroke="#fff" strokeWidth="4" /></svg></Collapse>
      </Legend>

      <Panel $h={231}><VolumeChart /></Panel>

      <Legend $h={63}>
        <Chip $w={187} $pl={5}><Fit w={143} size={36}>资金博弈</Fit><Triangle $ml={13} $w={14} $h={12} /></Chip>
        <Fit w={166} ml={3} size={39} color={RED}>超大:-0.028</Fit><Arrow $ml={8} $color={RED}>↑</Arrow>
        <Fit w={161} ml={17} size={39} color={ORANGE}>大户:-2.323</Fit><Arrow $ml={6} $color={ORANGE}>↑</Arrow>
        <Fit w={164} ml={19} size={39} color={BLUE}>中户:-0.632</Fit><Arrow $ml={8} $color={BLUE}>↑</Arrow>
        <Fit w={146} ml={18} size={39} color={GREEN}>小户:2.983</Fit><Arrow $ml={8} $color={GREEN}>↓</Arrow>
      </Legend>

      <Panel $h={232}><FundChart /></Panel>

      <Timeline>
        <Ticks />
        <Dates>
          <Fit w={163} size={37}>20250319</Fit>
          <Fit w={165} ml={95} size={37}>20250613</Fit>
          <Fit w={170} ml={186} size={37}>20250904</Fit>
          <Fit w={163} ml={105} size={37}>20251204</Fit>
        </Dates>
      </Timeline>

      <Banner>
        <svg width="46" height="40" viewBox="0 0 46 40" fill="#e95504"><path d="M0 13h4v15H0zM9 12 40 1q5-2 5 2v36L34 35v2L18 34v-4L9 28z" /></svg>
        <Fit w={767} ml={53} size={39} color={BRAND}>更高成长+更高弹性！看好创业板，怎么投？</Fit>
        <Rule />
        <svg width="34" height="34" viewBox="0 0 34 34" style={{ marginLeft: 15 }}><path d="m2 2 30 30M32 2 2 32" fill="none" stroke={BRAND} strokeWidth="3.200" /></svg>
      </Banner>
      <Gap />

      <Footer>
        <IndexRow>
          <Fit w={167} size={41}>创业板指</Fit>
          <Fit w={157} ml={99} size={43} weight={500} color="#ea2a2a">3055.78</Fit>
          <Fit w={122} ml={54} size={43} weight={500} color="#ea2a2a">0.63%</Fit>
          <Fit w={102} ml={55} size={43} weight={500} color="#ea2a2a">18.99</Fit>
          <Fit w={139} ml={53} size={43} weight={500}>3270亿</Fit>
          <svg width="24" height="14" viewBox="0 0 24 14" style={{ marginLeft: 35 }}><path d="m2 12 10-9 10 9" fill="none" stroke="#666" strokeWidth="2.800" /></svg>
        </IndexRow>
        <Actions>
          <TradeButton $from="#f4504b" $to="#ed746c"><Fit w={93} size={46} weight={500}>买入</Fit></TradeButton>
          <TradeButton $from="#3a76f8" $to="#6c9bfe"><Fit w={93} size={46} weight={500}>卖出</Fit></TradeButton>
          <Action $w={70} $ml={43}>
            <ActionIcon $pt={6}><Fit w={54} size={54} weight={500}>撤</Fit></ActionIcon>
            <Fit w={66} size={33} color="#606060">撤单</Fit>
          </Action>
          <Action $w={100} $ml={48}>
            <ActionIcon>
              <svg width="54" height="60" viewBox="0 0 54 60"><path d="M23.500 4 5.500 14.500Q3 16 3 19v22q0 3 2.500 4.500L23.500 56q3.500 2 7 0l18-10.500Q51 44 51 41V19q0-3-2.500-4.500L30.500 4q-3.500-2-7 0z" {...iconLine} strokeWidth="4" /><circle cx="27" cy="30" r="9.500" {...iconLine} strokeWidth="4" /></svg>
            </ActionIcon>
            <Fit w={98} size={33} color="#606060">设自选</Fit>
          </Action>
          <Action $w={70} $ml={47}>
            <ActionIcon $pt={6}>
              <svg width="46" height="10" viewBox="0 0 46 10" fill="#333"><circle cx="5" cy="5" r="4.600" /><circle cx="23" cy="5" r="4.600" /><circle cx="41" cy="5" r="4.600" /></svg>
            </ActionIcon>
            <Fit w={66} size={33} color="#606060">更多</Fit>
          </Action>
        </Actions>
        <HomeBar />
      </Footer>
    </Page>
  );
}

export default App;
